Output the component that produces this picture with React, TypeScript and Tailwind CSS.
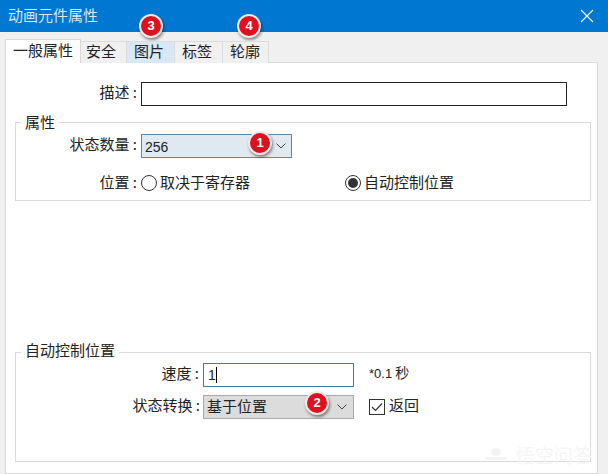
import React from "react";

const Chevron = () => (
  <svg width="10" height="6" viewBox="0 0 10 6" fill="none" stroke="#444" strokeWidth="1" className="shrink-0">
    <path d="M0.5 0.5 L5 5 L9.5 0.5" />
  </svg>
);

const Badge = ({ n, className }: { n: string; className: string }) => (
  <div
    className={`absolute w-[20px] h-[20px] rounded-full bg-[#dc1220] border-2 border-[#f3e9e6] shadow-[1px_2px_3px_rgba(0,0,0,0.45)] flex items-center justify-center text-white text-[13px] font-bold font-['Liberation_Sans',sans-serif] box-content -m-[2px] ${className}`}
  >
    {n}
  </div>
);

const Tab = ({ label, className }: { label: string; className: string }) => (
  <div className={`flex items-center justify-center border border-b-0 pb-[3px] ${className}`}>{label}</div>
);

export default function App() {
  return (
    <div className="relative w-[608px] h-[474px] overflow-hidden flex flex-col bg-[#f0f0f0] text-[15px] leading-[20px] text-[#222222] font-['Noto_Sans_CJK_SC',sans-serif]">
      {/* Title bar */}
      <div className="h-8 shrink-0 bg-[#0078d2] flex items-center justify-between pl-2 pr-[14px] text-[#d5e8f7]">
        <span className="text-[15px] pb-[2px]">动画元件属性</span>
        <svg width="14" height="14" viewBox="0 0 14 14" stroke="#ffffff" strokeWidth="1.1" fill="none">
          <path d="M1 1 L13 13 M13 1 L1 13" />
        </svg>
      </div>

      {/* Tab strip */}
      <div className="h-[31px] shrink-0 flex items-end pl-[5px] relative z-10 -mb-px">
        <Tab label="一般属性" className="w-[76px] h-[24px] bg-white border-[#d9d9d9]" />
        <Tab label="安全" className="w-[46px] h-[22px] bg-[#f0f0f0] border-[#dcdcdc] border-l-0 pr-[5px]" />
        <Tab label="图片" className="w-[48px] h-[22px] bg-[#d9e8f6] border-[#dcdcdc] border-l-0 pr-[3px]" />
        <Tab label="标签" className="w-[48px] h-[22px] bg-[#f0f0f0] border-[#dcdcdc] border-l-0 pr-[3px]" />
        <Tab label="轮廓" className="w-[46px] h-[22px] bg-[#f0f0f0] border-[#dcdcdc] border-l-0 pr-[1px]" />
      </div>

      {/* Panel */}
      <div className="flex-1 ml-[5px] w-[593px] bg-white border border-[#d9d9d9] pl-[9px] pr-[6px] flex flex-col">
        {/* Description */}
        <div className="flex items-center mt-[19px] h-[24px]">
          <span className="w-[126px] text-right pr-[4px] pb-[4px]">描述 :</span>
          <div className="w-[426px] h-[24px] border border-[#222222] bg-white" />
        </div>

        {/* Group 1 */}
        <div className="relative mt-[16px] h-[79px] border border-[#d9d9d9]">
          <span className="absolute left-[5px] -top-[10px] bg-white px-[4px] leading-[18px]">属性</span>
          <div className="flex items-center mt-[11px] h-[24px]">
            <span className="w-[125px] text-right pr-[4px] pb-[4px]">状态数量 :</span>
            <div className="w-[151px] h-[24px] border border-[#5b87ab] bg-[#e1e9f0] flex items-center justify-between pl-[3px] pr-[5px] text-[14px] font-['Liberation_Sans',sans-serif]">
              <span className="pt-[1px]">256</span>
              <Chevron />
            </div>
          </div>
          <div className="flex items-center mt-[13px] h-[24px]">
            <span className="w-[125px] text-right pr-[4px] pb-[3px]">位置 :</span>
            <div className="w-[16px] h-[16px] rounded-full border border-[#333] bg-white" />
            <span className="ml-[3px] w-[185px] pb-[3px]">取决于寄存器</span>
            <div className="w-[16px] h-[16px] rounded-full border border-[#333] bg-white flex items-center justify-center">
              <div className="w-[10px] h-[10px] rounded-full bg-[#333]" />
            </div>
            <span className="ml-[3px] pb-[3px]">自动控制位置</span>
          </div>
        </div>

        {/* Group 2 */}
        <div className="relative mt-[151px] h-[110px] border border-[#d9d9d9]">
          <span className="absolute left-[5px] -top-[12px] bg-white px-[4px] leading-[18px] whitespace-nowrap">自动控制位置</span>
          <div className="flex items-center mt-[10px] h-[24px]">
            <span className="w-[187px] text-right pr-[4px] pb-[5px]">速度 :</span>
            <div className="w-[151px] h-[24px] border border-[#3c7f9c] bg-white flex items-center pl-[4px] text-[14px] font-['Liberation_Sans',sans-serif]">
              <span>1</span>
              <span className="w-px h-[16px] bg-black" />
            </div>
            <span className="ml-[15px] text-[14px] pb-[5px]">
              <span className="font-['Liberation_Sans',sans-serif] text-[13px] mr-[3px]">*0.1</span>秒
            </span>
          </div>
          <div className="flex items-center mt-[8px] h-[24px]">
            <span className="w-[187px] text-right pr-[3px] pb-[5px]">状态转换 :</span>
            <div className="w-[151px] h-[24px] border border-[#a8a8a8] bg-[#dcdcdc] flex items-center justify-between pl-[3px] pr-[6px]">
              <span className="pb-[2px]">基于位置</span>
              <Chevron />
            </div>
            <div className="ml-[15px] w-[16px] h-[16px] border border-[#333] bg-white flex items-center justify-center">
              <svg width="12" height="10" viewBox="0 0 12 10" fill="none" stroke="#333" strokeWidth="1.2">
                <path d="M1 5 L4.5 8.5 L11 1.5" />
              </svg>
            </div>
            <span className="ml-[4px] pb-[5px]">返回</span>
          </div>
        </div>
      </div>

      {/* Callouts */}
      <Badge n="1" className="left-[250px] top-[133px]" />
      <Badge n="2" className="left-[307px] top-[393px]" />
      <Badge n="3" className="left-[141px] top-[16px]" />
      <Badge n="4" className="left-[239px] top-[16px]" />

      {/* Watermark */}
      <div className="absolute left-[484px] top-[444px] flex items-center gap-[8px] text-[19px] leading-[22px] text-[#f5f5f5]">
        <svg width="24" height="16" viewBox="0 0 24 16" fill="#f3f3f3">
          <ellipse cx="12" cy="5" rx="5" ry="4" />
          <rect x="1" y="10" width="22" height="3" rx="1.5" />
        </svg>
        <span className="whitespace-nowrap">悟空问答</span>
      </div>
    </div>
  );
}
